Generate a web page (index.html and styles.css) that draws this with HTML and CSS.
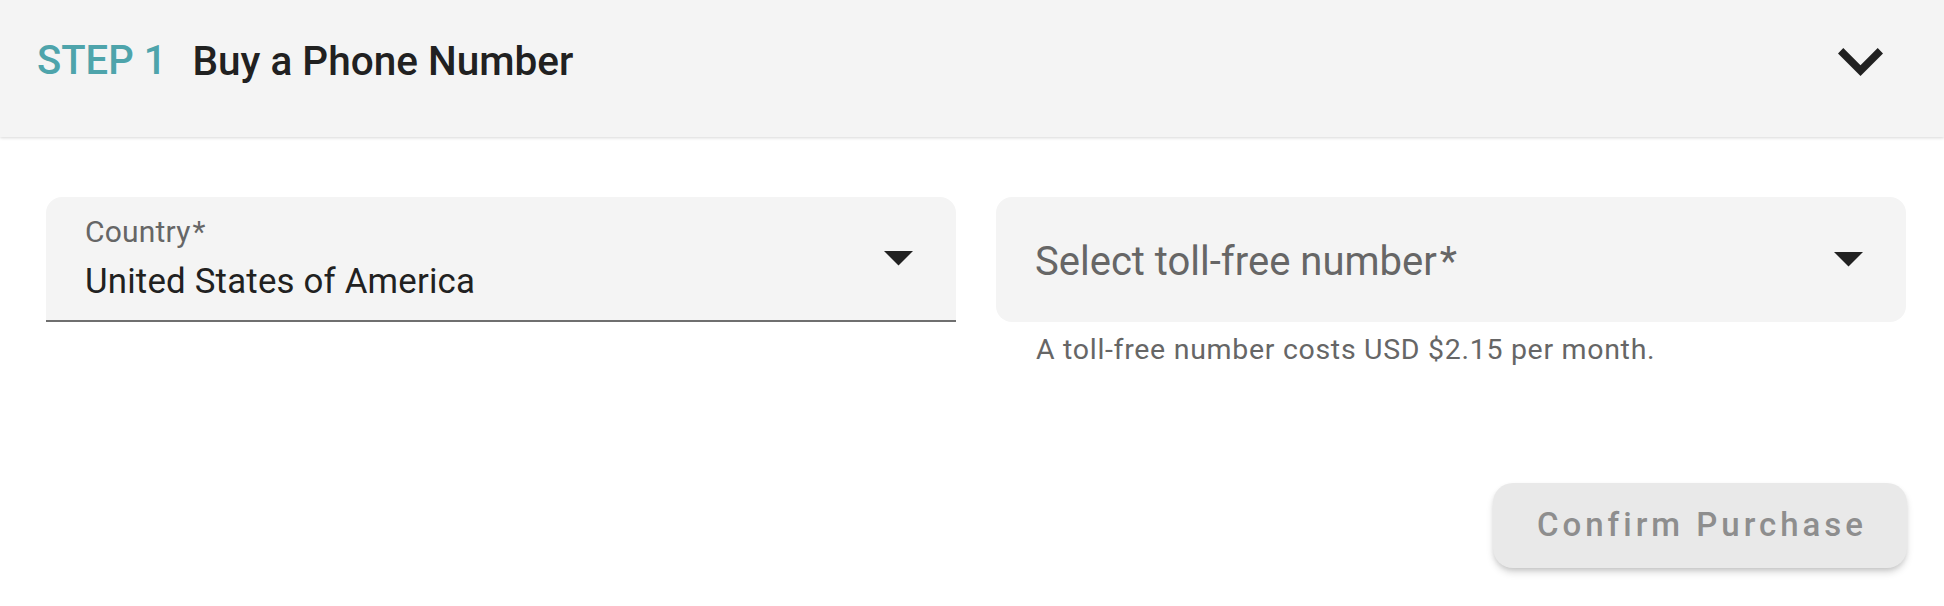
FILE: index.html
```html
<!DOCTYPE html>
<html lang="en">
<head>
<meta charset="utf-8">
<title>Buy a Phone Number</title>
<link rel="stylesheet" href="styles.css">
</head>
<body>
<section class="accordion">
  <header class="summary">
    <span class="step">STEP 1</span>
    <h2 class="title">Buy a Phone Number</h2>
    <svg class="expand" viewBox="6 8.59 12 7.41" aria-hidden="true"><path d="M16.59 8.59L12 13.17 7.41 8.59 6 10l6 6 6-6z"/></svg>
  </header>
  <div class="details">
    <div class="fields">
      <div class="col">
        <div class="select filled">
          <div class="select-text">
            <span class="label">Country<span class="req">*</span></span>
            <span class="value">United States of America</span>
          </div>
          <svg class="arrow" viewBox="7 10 10 5" aria-hidden="true"><path d="M7 10l5 5 5-5z"/></svg>
        </div>
      </div>
      <div class="col">
        <div class="select empty">
          <div class="select-text">
            <span class="placeholder">Select toll-free number<span class="req">*</span></span>
          </div>
          <svg class="arrow" viewBox="7 10 10 5" aria-hidden="true"><path d="M7 10l5 5 5-5z"/></svg>
        </div>
        <p class="helper">A toll-free number costs USD $2.15 per month.</p>
      </div>
    </div>
    <div class="actions">
      <button class="btn" disabled>Confirm Purchase</button>
    </div>
  </div>
</section>
</body>
</html>
```

FILE: styles.css
```css
* { box-sizing: border-box; }
html, body { margin: 0; padding: 0; background: #ffffff; }
body {
  font-family: Roboto, "Noto Sans", "Liberation Sans", sans-serif;
  color: #212121;
  width: 1944px;
  height: 606px;
  overflow: hidden;
}

.summary {
  display: flex;
  align-items: center;
  background: #f4f4f4;
  height: 137px;
  padding: 37px 61px 52px 37px;
  box-shadow: 0 1px 3px rgba(0, 0, 0, 0.16);
  position: relative;
  z-index: 1;
}
.step {
  font-size: 40px;
  line-height: 48px;
  font-weight: 500;
  color: #4ea4ab;
}
.title {
  margin: 0 0 0 26px;
  font-size: 40.5px;
  line-height: 48px;
  font-weight: 500;
  color: #212121;
  flex: 1;
}
.expand {
  width: 45px;
  height: 28px;
  fill: #212121;
  margin-top: 1px;
}

.details {
  padding: 60px 37px 0 46px;
}
.fields {
  display: grid;
  grid-template-columns: 910px 910px;
  column-gap: 40px;
}
.select {
  display: flex;
  align-items: center;
  height: 125px;
  background: #f4f4f4;
  padding: 0 43px 0 39px;
}
.select.filled {
  border-radius: 16px 16px 0 0;
  border-bottom: 2px solid #6f6f6f;
}
.select.empty {
  border-radius: 16px;
}
.select-text {
  flex: 1;
  display: flex;
  flex-direction: column;
}
.label {
  font-size: 30px;
  line-height: 36px;
  color: #666666;
  letter-spacing: 0.2px;
  margin-top: -1px;
}
.req {
  margin-left: 2px;
}
.value {
  margin-top: 10px;
  font-size: 34.8px;
  line-height: 42px;
  color: #212121;
  letter-spacing: 0.2px;
}
.placeholder {
  font-size: 40px;
  line-height: 48px;
  color: #666666;
  margin-top: 5px;
}
.placeholder .req {
  margin-left: 3px;
}
.arrow {
  width: 29px;
  height: 14.5px;
  fill: #212121;
}
.helper {
  margin: 10px 0 0 40px;
  font-size: 28.5px;
  line-height: 36px;
  color: #666666;
  letter-spacing: 0.7px;
}

.actions {
  display: flex;
  justify-content: flex-end;
  margin-top: 115px;
}
.btn {
  font-family: Roboto, "Noto Sans", "Liberation Sans", sans-serif;
  height: 85px;
  width: 414px;
  padding: 0 0 3px 4px;
  border: 0;
  border-radius: 20px;
  background: #e9e9e9;
  color: #8e8e8e;
  font-size: 33px;
  font-weight: 500;
  letter-spacing: 4px;
  box-shadow: 0 5px 8px -2px rgba(0, 0, 0, 0.22), 0 2px 4px rgba(0, 0, 0, 0.06);
}
```
